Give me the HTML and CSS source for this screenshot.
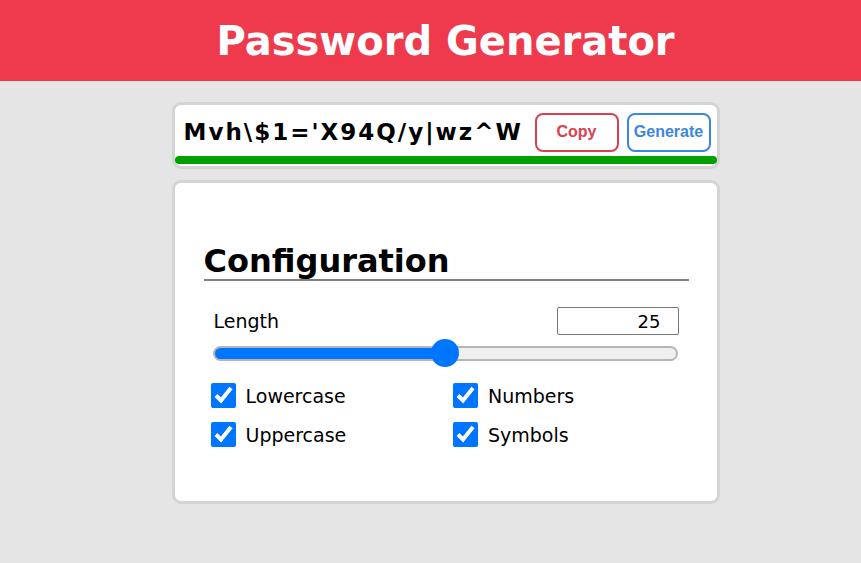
FILE: index.html
```html
<!DOCTYPE html>
<html>
<head>
<meta charset="utf-8">
<link rel="stylesheet" href="styles.css">
</head>
<body>
<header class="header"><h1 class="title">Password Generator</h1></header>
<main class="main">
  <section class="card result">
    <div class="result-row">
      <span class="password">Mvh\$1='X94Q/y|wz^W</span>
      <button class="btn btn-copy">Copy</button>
      <button class="btn btn-gen">Generate</button>
    </div>
    <div class="strength"></div>
  </section>
  <section class="card config">
    <h2 class="config-title">Configuration</h2>
    <div class="length-row">
      <label class="length-label">Length</label>
      <input class="length-input" type="number" value="25">
    </div>
    <input class="slider" type="range" min="0" max="50" value="25">
    <div class="options">
      <label class="opt"><input type="checkbox" checked><span>Lowercase</span></label>
      <label class="opt"><input type="checkbox" checked><span>Numbers</span></label>
      <label class="opt"><input type="checkbox" checked><span>Uppercase</span></label>
      <label class="opt"><input type="checkbox" checked><span>Symbols</span></label>
    </div>
  </section>
</main>
</body>
</html>
```
FILE: styles.css
```css
* { box-sizing: border-box; }
html, body { margin: 0; padding: 0; }
body {
  background: #e5e5e5;
  font-family: "DejaVu Sans", Verdana, sans-serif;
  color: #000;
  width: 861px;
  height: 563px;
  overflow: hidden;
}
.header {
  background: #ee3a4c;
  height: 81px;
  display: flex;
  align-items: center;
  justify-content: center;
  padding-left: 30px;
}
.title {
  margin: 0;
  color: #fff;
  font-size: 40px;
  font-weight: bold;
}
.main {
  padding: 21px 0 0 30px;
  display: flex;
  flex-direction: column;
  align-items: center;
  gap: 11px;
}
.card {
  width: 548px;
  background: #fff;
  border: 3px solid #d4d4d4;
  border-radius: 9px;
}
.result {
  padding: 7px 0 0;
  height: 67px;
  display: flex;
  flex-direction: column;
}
.result-row {
  display: flex;
  align-items: center;
  padding: 0 6px 0 9px;
  height: 40px;
}
.password {
  font-size: 23px;
  font-weight: bold;
  letter-spacing: 2px;
  flex: 1;
  white-space: nowrap;
}
.btn {
  background: #fff;
  font-family: "Liberation Sans", Arial, sans-serif;
  font-weight: bold;
  font-size: 16px;
  width: 84px;
  height: 39px;
  border-radius: 8px;
  border: 2px solid;
  padding: 0;
}
.btn-copy { color: #d9414f; border-color: #d9414f; margin-right: 8px; }
.btn-gen { color: #3a86e0; border-color: #3a86e0; }
.strength {
  margin: 4px 0 0;
  height: 8px;
  background: #00a000;
  border-radius: 4px;
}
.config {
  height: 324px;
  padding: 60px 28px 0 29px;
}
.config-title {
  margin: 0;
  font-size: 32px;
  font-weight: bold;
  border-bottom: 2px solid #808080;
  padding-bottom: 0;
  line-height: 36px;
}
.length-row {
  display: flex;
  justify-content: space-between;
  align-items: center;
  padding: 26px 10px 0 10px;
}
.length-label { font-size: 19px; }
.length-input {
  width: 122px;
  height: 28px;
  border: 1px solid #767676;
  border-radius: 2px;
  font-family: "DejaVu Sans", sans-serif;
  font-size: 18px;
  text-align: right;
  padding: 0 17px 0 0;
}
.length-input::-webkit-inner-spin-button { -webkit-appearance: none; }
.slider {
  -webkit-appearance: none;
  appearance: none;
  display: block;
  margin: 4px 10px 0 9px;
  width: 465px;
  height: 28px;
  background: transparent;
}
.slider::-webkit-slider-runnable-track {
  height: 15px;
  border-radius: 8px;
  border: 2px solid #b5b5b5;
  background: linear-gradient(to right, #0075ff 0, #0075ff 50%, #efefef 50%);
}
.slider::-webkit-slider-thumb {
  -webkit-appearance: none;
  width: 28px;
  height: 28px;
  border-radius: 50%;
  background: #0075ff;
  margin-top: -8.5px;
}
.options {
  display: grid;
  grid-template-columns: 1fr 1fr;
  row-gap: 14px;
  margin-top: 16px;
}
.opt {
  display: flex;
  align-items: center;
  font-size: 19px;
  padding-left: 7px;
}
.opt input {
  width: 25px;
  height: 25px;
  margin: 0 10px 0 0;
  accent-color: #0075ff;
}
```
